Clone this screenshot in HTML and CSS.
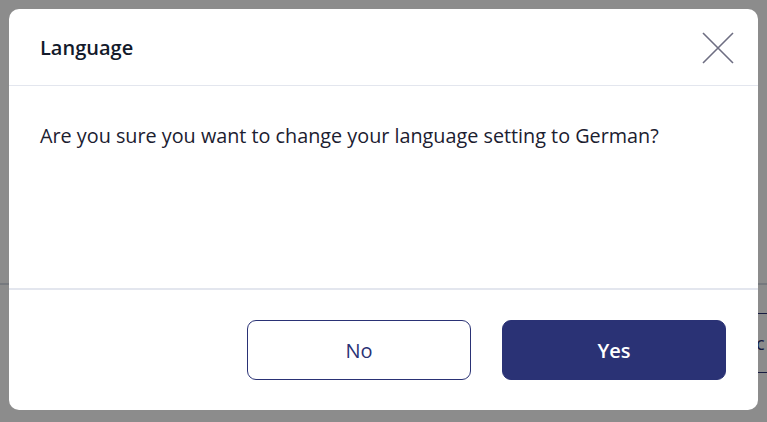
FILE: index.html
```html
<!DOCTYPE html>
<html>
<head>
<meta charset="utf-8">
<link rel="stylesheet" href="styles.css">
</head>
<body>
<div class="page">
  <div class="bg-rule"></div>
  <div class="bg-button"><span class="bg-label">c</span></div>
</div>
<div class="overlay">
  <div class="dialog">
    <div class="dialog-header">
      <h2 class="dialog-title">Language</h2>
      <button class="close" aria-label="Close">
        <svg width="32" height="32" viewBox="0 0 32 32"><path d="M1 1 L31 31 M31 1 L1 31" stroke="#6e6e82" stroke-width="1.6" fill="none"/></svg>
      </button>
    </div>
    <div class="dialog-body">
      <p class="message">Are you sure you want to change your language setting to German?</p>
    </div>
    <div class="dialog-footer">
      <button class="btn btn-outline">No</button>
      <button class="btn btn-primary">Yes</button>
    </div>
  </div>
</div>
</body>
</html>
```

FILE: styles.css
```css
* { box-sizing: border-box; }
html, body { margin: 0; padding: 0; }
body {
  width: 767px;
  height: 422px;
  overflow: hidden;
  font-family: "Open Sans", "Liberation Sans", sans-serif;
  background: #ffffff;
  position: relative;
}
.page { position: absolute; inset: 0; }
.bg-rule {
  position: absolute;
  left: 0; right: 0; top: 283px;
  height: 2px;
  background: #d8dce6;
}
.bg-button {
  position: absolute;
  left: 740px; top: 313px;
  width: 27px; height: 60px;
  border-top: 1px solid #2a3275;
  border-bottom: 1px solid #2a3275;
  color: #2a3275;
  font-size: 18px;
  line-height: 58px;
  padding-left: 16px;
}
.bg-label { display: inline-block; }
.overlay {
  position: absolute;
  inset: 0;
  background: rgba(0, 0, 0, 0.45);
  padding: 9px 9px 12px 9px;
}
.dialog {
  width: 749px;
  height: 401px;
  background: #ffffff;
  border-radius: 10px;
  display: flex;
  flex-direction: column;
  overflow: hidden;
}
.dialog-header {
  height: 77px;
  display: flex;
  align-items: center;
  justify-content: space-between;
  padding: 0 24px 0 31px;
  border-bottom: 1px solid #e3e6ee;
}
.dialog-title {
  margin: 0;
  font-size: 20px;
  font-weight: 600;
  color: #131a2b;
}
.close {
  border: 0;
  background: none;
  padding: 0;
  width: 32px;
  height: 32px;
  margin-top: 2px;
  cursor: pointer;
}
.close svg { display: block; }
.dialog-body {
  flex: 1;
  padding: 37px 31px 0;
  border-bottom: 2px solid #e3e6ee;
}
.message {
  margin: 0;
  font-size: 19.8px;
  color: #1b2030;
  line-height: 26px;
}
.dialog-footer {
  height: 120px;
  display: flex;
  justify-content: flex-end;
  align-items: center;
  gap: 31px;
  padding: 0 32px 0 0;
}
.btn {
  width: 224px;
  height: 60px;
  border-radius: 9px;
  font-family: "Open Sans", "Liberation Sans", sans-serif;
  font-size: 20px;
}
.btn-outline {
  background: #ffffff;
  border: 1px solid #2a3275;
  color: #2a3275;
}
.btn-primary {
  background: #2a3275;
  border: 1px solid #2a3275;
  color: #ffffff;
  font-weight: 600;
}
```
